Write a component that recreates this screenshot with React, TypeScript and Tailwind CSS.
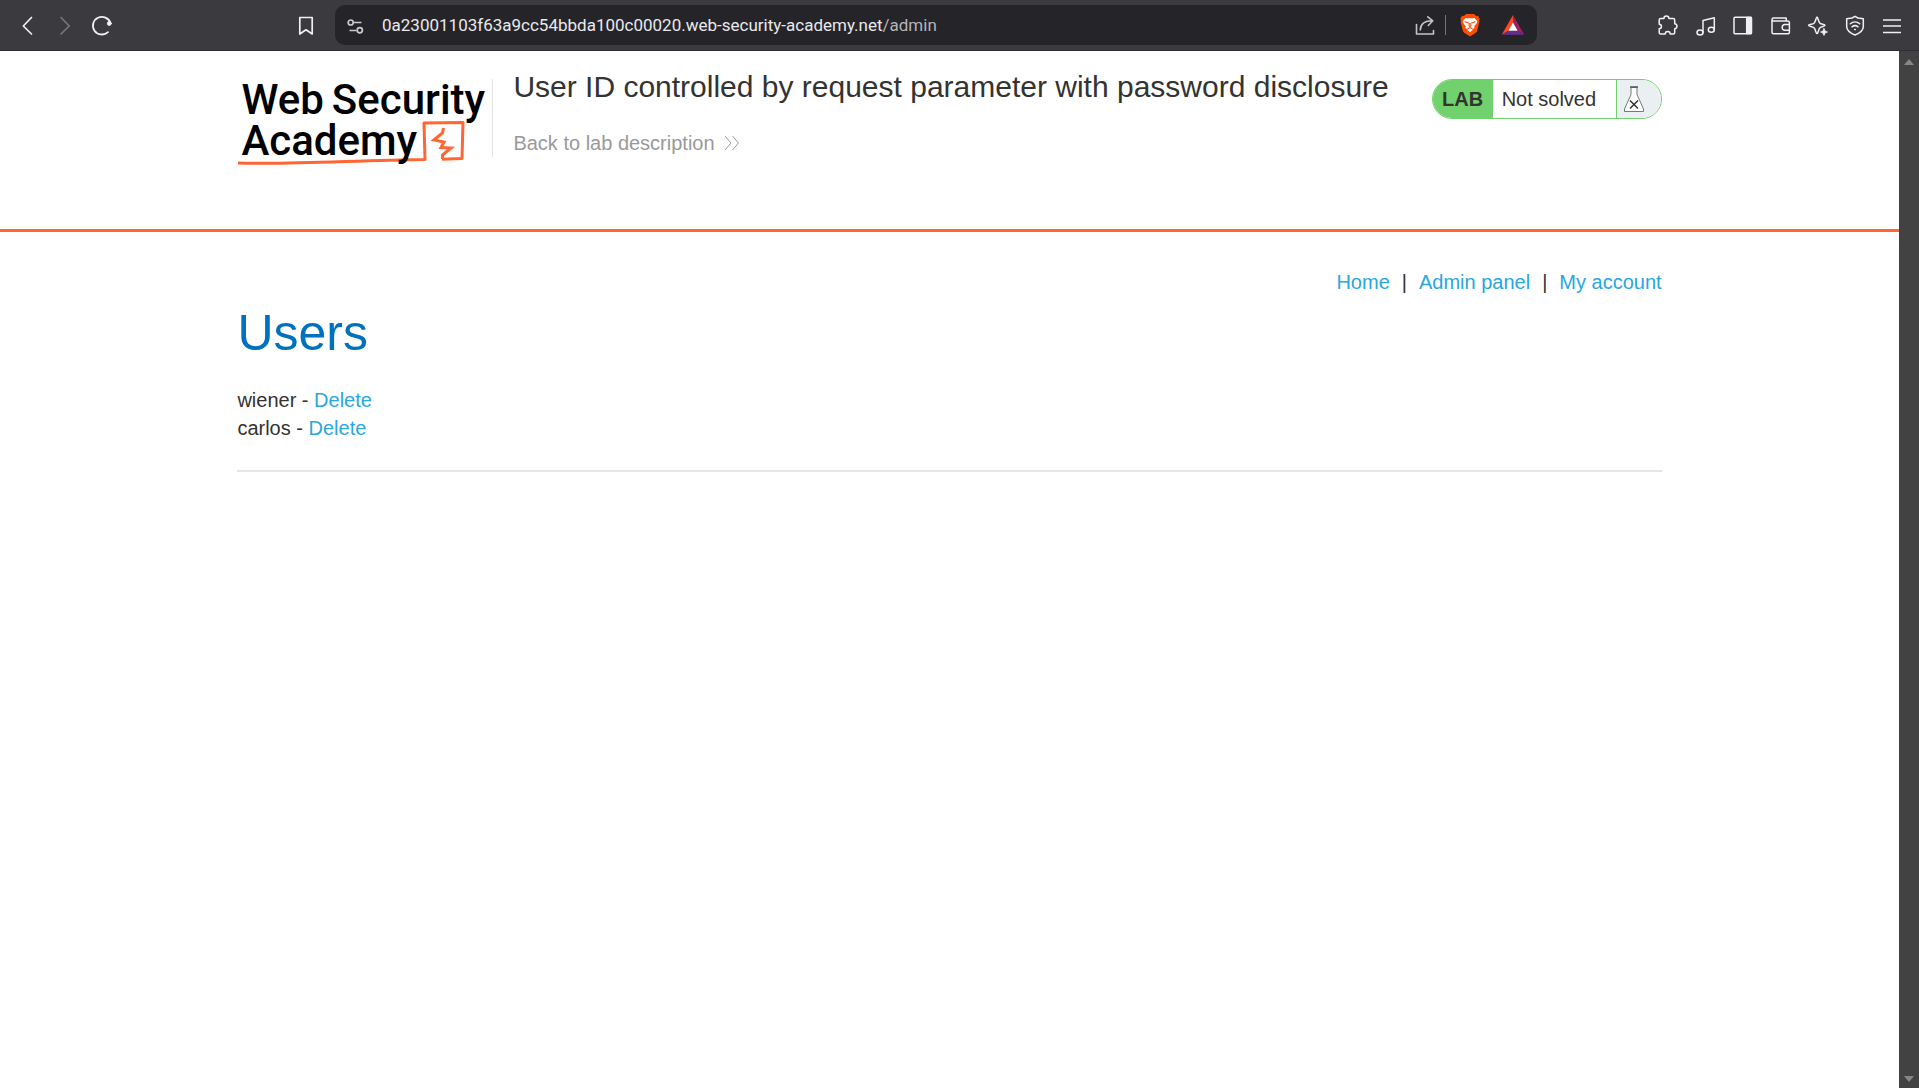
import type { ReactNode } from "react";

function ToolIcon({ label, children, dim = false }: { label: string; children: ReactNode; dim?: boolean }) {
  return (
    <button
      type="button"
      aria-label={label}
      className={`flex size-6 shrink-0 items-center justify-center ${dim ? "text-[#77777b]" : "text-[#f0f0f4]"}`}
    >
      <svg viewBox="0 0 24 24" className="size-6" fill="none" stroke="currentColor" strokeWidth="1.5" strokeLinecap="round" strokeLinejoin="round" aria-hidden="true">
        {children}
      </svg>
    </button>
  );
}

function BraveIcon() {
  return (
    <svg viewBox="0 0 20 24" className="h-6 w-5" aria-hidden="true">
      <path d="M6 1h8l2 2 2-.2 1.700 3-.7 1.700.4 1.200-2.300 9.300-1.300 1.800L10 23.500l-5.800-3.700-1.300-1.800L.6 8.700 1 7.500.3 5.800l1.700-3 2 .2z" fill="#fb4f04" />
      <path d="M5.500 5 8 5.500l2-.5 2 .5 2.500-.5L17.300 8.300l-.6 2-2.500 2.900.4 1.800-2.400 1.300.3.900L10 19l-2.500-1.800.3-.9L5.400 15l.4-1.800-2.500-2.900-.6-2z" fill="#fff" />
      <path d="M5 8.800 8.300 10M15 8.800 11.700 10M9.300 10.500 9 12.600l1 1 1-1-.3-2.100M8 15.600l2-1 2 1" fill="none" stroke="#fb4f04" strokeWidth="1.100" strokeLinecap="round" strokeLinejoin="round" />
    </svg>
  );
}

function BatIcon() {
  return (
    <svg viewBox="0 0 24 24" className="size-6" aria-hidden="true">
      <path d="M12 2 .7 21.800 8 17.500 12 10z" fill="#ff4724" />
      <path d="m12 2 11.300 19.800-7.300-4.300L12 10z" fill="#9e1f63" />
      <path d="m.7 21.800 7.300-4.300h8l7.300 4.300z" fill="#662d91" />
      <path d="m12 9.500 4.600 8.300H7.400z" fill="#fff" />
    </svg>
  );
}

function BrowserBar() {
  return (
    <header className="flex h-[51px] shrink-0 items-center border-b border-[#2f2e33] bg-[#3b3a3f] pr-[15px] pl-4">
      <div className="flex items-center gap-[13px]">
        <ToolIcon label="Back"><path d="M15.500 4.500 7.300 13l8.200 8" strokeWidth="1.700" /></ToolIcon>
        <ToolIcon label="Forward" dim><path d="m8 4.500 8.200 8.500L8 21" strokeWidth="1.700" /></ToolIcon>
        <ToolIcon label="Reload">
          <path d="M20.500 10A9 8.800 0 1 0 18 19.200" strokeWidth="1.800" />
          <circle cx="19.300" cy="10.500" r="1.900" fill="currentColor" strokeWidth="1" />
        </ToolIcon>
      </div>
      <div className="ml-[180px] flex">
        <ToolIcon label="Bookmark this page"><path d="M5.800 4.500h12.400V21L12 16.800 5.800 21z" strokeWidth="1.700" /></ToolIcon>
      </div>
      <div className="ml-[17px] flex h-10 w-[1202px] min-w-0 shrink items-center rounded-[10px] bg-[#252429] pr-3 pl-2">
        <button type="button" aria-label="Site information" className="flex size-6 shrink-0 items-center justify-center text-[#c9c9ce]">
          <svg viewBox="0 0 24 24" className="size-6" fill="none" stroke="currentColor" strokeWidth="1.700" aria-hidden="true">
            <circle cx="7.700" cy="9.500" r="2.500" />
            <path d="M10.500 9.500h8M6.500 17.500h7" />
            <circle cx="16.800" cy="17.300" r="2.600" />
          </svg>
        </button>
        <div role="textbox" aria-label="Address" className="min-w-0 flex-1 truncate pl-[15px] font-['Roboto',sans-serif] text-[17px] leading-6 text-[#e9e9ed]">
          0a23001103f63a9cc54bbda100c00020.web-security-academy.net<span className="text-[#b4b4b9]">/admin</span>
        </div>
        <div className="flex shrink-0 items-center">
          <button type="button" aria-label="Share" className="flex size-6 text-[#c4c4c9]">
            <svg viewBox="0 0 24 24" className="size-6" fill="none" stroke="currentColor" strokeWidth="1.600" strokeLinecap="round" strokeLinejoin="round" aria-hidden="true">
              <path d="M3.500 11.500V21h17v-3.500M7.300 17c.2-5.500 4.200-9.200 12-9.200M14.800 3.800l5 4-4.500 4.700" />
            </svg>
          </button>
          <span className="ml-2 h-5 w-px bg-[#77777b]" />
          <button type="button" aria-label="Brave Shields" className="ml-[14px] flex"><BraveIcon /></button>
          <button type="button" aria-label="Brave Rewards" className="ml-[21px] flex"><BatIcon /></button>
        </div>
      </div>
      <div className="ml-auto flex items-center gap-[13px]">
        <ToolIcon label="Extensions">
          <path d="M1.200 7a1.500 1.500 0 0 1 1.500-1.500h3.200c0-3.300 5-3.300 5 0h4.300A1.500 1.500 0 0 1 16.700 7v3.700c3 .2 3 4.800 0 5V19.500a1.500 1.500 0 0 1-1.500 1.500h-3c0-3.500-5-3.500-5 0H2.700a1.500 1.500 0 0 1-1.500-1.500v-3.700c3-.2 3-4.300 0-4.500z" />
        </ToolIcon>
        <ToolIcon label="Media">
          <ellipse cx="5" cy="19.500" rx="3" ry="2.500" />
          <ellipse cx="16.300" cy="16.800" rx="3" ry="2.500" />
          <path d="M8 19.500V7.500l11.300-2.700v12" />
        </ToolIcon>
        <ToolIcon label="Sidebar">
          <rect x="2" y="4.300" width="17.500" height="16.500" rx="1" />
          <path d="M14.700 4.500h4.500v16h-4.500z" fill="currentColor" />
        </ToolIcon>
        <ToolIcon label="Wallet">
          <path d="M3 7v12.300A1.500 1.500 0 0 0 4.500 20.800h14.400a1.500 1.500 0 0 0 1.500-1.500V9.500A1.500 1.500 0 0 0 18.900 8H4.500c-2 0-2-3 0-3h12.700v3M20.400 11.500h-5a3 3 0 0 0 0 5.800h5" />
        </ToolIcon>
        <ToolIcon label="Leo AI">
          <path d="M11 4c1 0 1.200 5.200 3 6.300 1.500 1 5 .9 5 2s-3.500 1.200-5 2.500c-1.700 1.500-1.700 5.700-3 5.700s-1.300-4.200-3-5.700c-1.500-1.300-5.500-1.500-5.500-2.500s4-1 5.500-2C9.800 9.200 10 4 11 4z" />
          <path d="m18 15.500 1.100 2.400 2.400 1.100-2.400 1.100L18 22.500l-1.100-2.400-2.400-1.100 2.400-1.100z" fill="currentColor" strokeWidth=".7" />
        </ToolIcon>
        <ToolIcon label="VPN">
          <path d="M12 3.300 15 5l5.300.8v8c0 4-4.500 6.700-8.300 8.200-3.800-1.500-8.300-4.200-8.300-8.200v-8L9 5z" />
          <path d="M7.300 10.800c2.700-2.300 6.700-2.300 9.400 0M9 13.800c1.800-1.400 4.200-1.400 6 0M11.700 16.500h.6" />
        </ToolIcon>
        <ToolIcon label="Menu"><path d="M3 7h18M3 13h18M3 19.500h18" strokeLinecap="butt" strokeWidth="1.600" /></ToolIcon>
      </div>
    </header>
  );
}

function AcademyLogo() {
  return (
    <a href="#academy" aria-label="Web Security Academy" className="relative block h-[78px] w-[256px] shrink-0 border-r border-[#e3e3e3] font-['Roboto',sans-serif] text-[42px] font-medium text-black">
      <span className="flex h-[41px] items-center gap-2 pl-1 leading-[41px]"><span>Web</span><span>Security</span></span>
      <span className="flex h-[41px] items-center pl-1 leading-[41px]">Academy</span>
      <svg viewBox="0 0 256 90" className="absolute top-0 left-0 -z-10 h-[90px] w-[256px]" fill="none" aria-hidden="true">
        <path d="M1 84c55 2 120-3 187-3.500l-1-36.500 39-.5-1 36-20 .8" stroke="#ff6633" strokeWidth="3" strokeLinejoin="round" />
        <path d="m206.500 49-1 5-8.500 7 10 2-3 5.500 10 .5-8.500 7v4" stroke="#ff6633" strokeWidth="3" strokeLinejoin="miter" />
      </svg>
    </a>
  );
}

function LabStatus() {
  return (
    <div className="mt-[11px] flex h-10 shrink-0 overflow-hidden rounded-full border border-[#70d16d] bg-white text-xl">
      <strong className="flex w-[60px] items-center justify-center bg-[#70d16d] leading-7">LAB</strong>
      <p className="flex w-[123px] items-center pl-[9px]">Not solved</p>
      <span className="flex w-[45px] items-center border-l border-[#70d16d] bg-[#eaeff2] pl-1.5">
        <svg viewBox="0 0 22 28" className="h-7 w-[22px]" aria-hidden="true">
          <path d="M8 2.500v7L1.500 24v2.500h19V24L14 9.500v-7z" fill="#fff" stroke="#777" strokeWidth="1" />
          <path d="M7 2h8" stroke="#555" strokeWidth="1.500" />
          <path d="m7 15.500 8 8M15 15.500l-8 8" stroke="#333" strokeWidth="1.500" />
        </svg>
      </span>
    </div>
  );
}

function LabHeader() {
  return (
    <section className="border-b-3 border-[#ff6633]">
      <div className="mx-auto flex h-[178px] w-3/4 items-start pt-[17px]">
        <div className="mt-[11px]"><AcademyLogo /></div>
        <div className="ml-5 min-w-0 flex-1">
          <h2 className="mt-px text-[30px] leading-9">User ID controlled by request parameter with password disclosure</h2>
          <a href="#description" className="mt-6 inline-flex items-center gap-[9px] text-xl leading-7 text-[#999999]">
            Back to lab description
            <svg viewBox="0 0 16 16" className="size-4" fill="none" stroke="currentColor" strokeWidth="1" aria-hidden="true">
              <path d="m1 1 6 7-6 7M8.500 1l6 7-6 7" />
            </svg>
          </a>
        </div>
        <LabStatus />
      </div>
    </section>
  );
}

const users = ["wiener", "carlos"];

function UsersPage() {
  return (
    <main className="mx-auto w-3/4 pt-9 text-xl leading-7">
      <nav className="flex justify-end gap-3">
        <a href="#home" className="text-[#29a7df]">Home</a>
        <span>|</span>
        <a href="#admin" className="text-[#29a7df]">Admin panel</a>
        <span>|</span>
        <a href="#account" className="text-[#29a7df]">My account</a>
      </nav>
      <h1 className="mt-1 text-[50px] leading-[66px] text-[#0071bd]">Users</h1>
      <ul className="mt-5">
        {users.map((name) => (
          <li key={name}>
            {name} - <a href={`#delete-${name}`} className="text-[#29a7df]">Delete</a>
          </li>
        ))}
      </ul>
      <hr className="mt-7 border-t-2 border-[#e5e5e5]" />
    </main>
  );
}

export default function App() {
  return (
    <div className="flex h-screen flex-col bg-white font-['Liberation_Sans',Arial,sans-serif] text-[#333332]">
      <BrowserBar />
      <div className="flex min-h-0 flex-1">
        <div className="isolate min-w-0 flex-1 overflow-hidden">
          <LabHeader />
          <UsersPage />
        </div>
        <div aria-hidden="true" className="flex w-5 shrink-0 flex-col items-center justify-between bg-[#424242] pt-2 pb-1.5 text-[#868686]">
          <svg viewBox="0 0 10 6" className="h-1.5 w-2.5" fill="currentColor"><path d="m5 0 5 6H0z" /></svg>
          <svg viewBox="0 0 10 6" className="h-1.5 w-2.5" fill="currentColor"><path d="M0 0h10L5 6z" /></svg>
        </div>
      </div>
    </div>
  );
}
